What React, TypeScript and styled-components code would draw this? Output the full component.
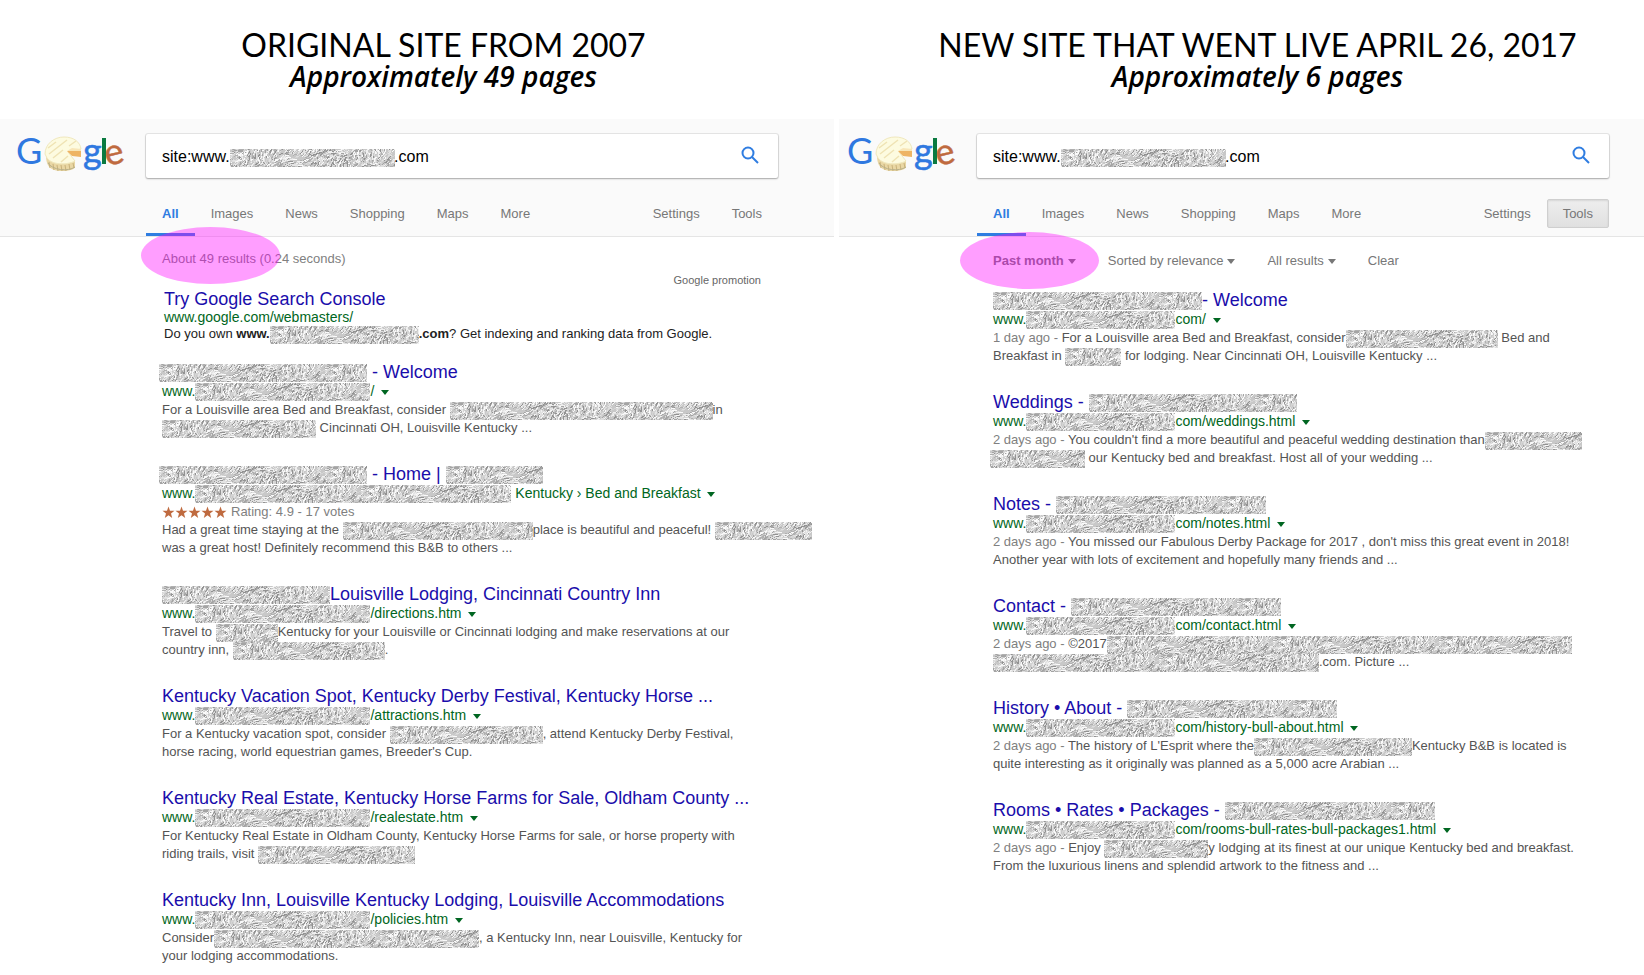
import React from "react";
import styled, { createGlobalStyle } from "styled-components";

const GlobalStyle = createGlobalStyle`
  * { box-sizing: border-box; }
  body {
    margin: 0;
    background: #fff;
    font-family: Arial, "Liberation Sans", sans-serif;
    overflow-x: hidden;
  }
  h2, h3, p { margin: 0; font-weight: 400; }
  button, input { font-family: inherit; }
`;

/* ---------- fur-like texture that hides private names ---------- */

const TILE_W = 166;
const TILE_H = 36;

const strokes = (() => {
  let seed = 20170426;
  const rnd = () => {
    seed = (seed * 1664525 + 1013904223) >>> 0;
    return seed / 4294967296;
  };
  const tones = ["#929292", "#a4a4a4", "#b0b0b0", "#e4e4e4", "#f0f0f0", "#fafafa", "#d4d4d4", "#dedede"];
  const list: { tone: string; d: string }[] = [];
  for (let i = 0; i < 2400; i += 1) {
    const x = rnd() * (TILE_W + 8) - 4;
    const y = rnd() * (TILE_H + 8) - 4;
    const field = Math.sin(x / 9 + Math.sin(y / 5) * 2) + Math.cos(y / 6 + x / 17);
    const angle = -0.8 + field * 0.4 + (rnd() - 0.5) * 0.9;
    const length = 2 + rnd() * 4;
    const dx = Math.cos(angle) * length;
    const dy = Math.sin(angle) * length;
    const tone = tones[Math.floor(rnd() * tones.length)];
    list.push({ tone, d: `M${x.toFixed(1)} ${y.toFixed(1)}l${dx.toFixed(1)} ${dy.toFixed(1)}` });
  }
  return list;
})();

const Defs = styled.svg`
  position: absolute;
  width: 0;
  height: 0;
`;

const TextureDefs = () => (
  <Defs aria-hidden="true">
    <defs>
      <pattern id="fur" width={TILE_W} height={TILE_H} patternUnits="userSpaceOnUse">
        <rect width={TILE_W} height={TILE_H} fill="#c8c8c8" />
        <g fill="none" strokeWidth="1" shapeRendering="crispEdges">
          {strokes.map((s, i) => (
            <path key={i} d={s.d} stroke={s.tone} />
          ))}
        </g>
      </pattern>
    </defs>
  </Defs>
);

const Bar = styled.svg<{ $outdent?: boolean }>`
  display: inline-block;
  height: 18px;
  margin: -4px 0 -4px ${(p) => (p.$outdent ? "-3px" : "0")};
  vertical-align: middle;
`;

const Redaction = ({ width, outdent }: { width: number; outdent?: boolean }) => (
  <Bar width={width} height={18} $outdent={outdent} aria-hidden="true">
    <rect width="100%" height="100%" fill="url(#fur)" />
  </Bar>
);

/* A line is a run of words and redacted spans; numbers are widths of the spans. */
type Part = string | number | { out: number } | { bold: string } | { date: string };
type Line = Part[];

const DateText = styled.span`
  color: #808080;
`;

const Parts = ({ line }: { line: Line }) => (
  <>
    {line.map((part, i) => {
      if (typeof part === "string") return <span key={i}>{part}</span>;
      if (typeof part === "number") return <Redaction key={i} width={part} />;
      if ("out" in part) return <Redaction key={i} width={part.out} outdent />;
      if ("bold" in part) return <b key={i}>{part.bold}</b>;
      return <DateText key={i}>{part.date}</DateText>;
    })}
  </>
);

/* ---------- page ---------- */

const Page = styled.main`
  display: grid;
  grid-template-columns: 834fr 805fr;
  column-gap: 5px;
  min-height: 100vh;
`;

const Panel = styled.section`
  min-width: 0;
`;

const Heading = styled.header<{ $shift: number }>`
  height: 119px;
  padding: 28px 0 0 ${(p) => p.$shift}px;
  text-align: center;
  color: #000;
  white-space: nowrap;
`;

const HeadingTitle = styled.h2`
  font-family: Lato, sans-serif;
  font-size: 32px;
  line-height: 34px;
`;

const HeadingNote = styled.p`
  font-family: "Open Sans", "Noto Sans", sans-serif;
  font-size: 28px;
  line-height: 28px;
  font-style: italic;
  font-weight: 600;
`;

const TopBar = styled.div<{ $gutter: number }>`
  height: 118px;
  padding: 15px 0 0 ${(p) => p.$gutter}px;
  background: #fafafa;
  border-bottom: 1px solid #e5e5e5;
`;

const SearchRow = styled.div`
  display: flex;
  align-items: flex-start;
`;

const LogoLink = styled.a`
  display: block;
  width: 129px;
  height: 44px;
  text-decoration: none;
`;

const LogoArt = styled.svg`
  display: block;
  margin: -10px 0 0 -3px;
  overflow: visible;
`;

const SearchBox = styled.form`
  position: relative;
  display: flex;
  align-items: center;
  width: 632px;
  height: 44px;
  background: #fff;
  border-radius: 2px;
  box-shadow: 0 1px 2px rgba(0, 0, 0, 0.28), 0 0 0 1px rgba(0, 0, 0, 0.08);
`;

const QueryInput = styled.input`
  flex: 1;
  min-width: 0;
  height: 44px;
  padding: 2px 16px 0;
  border: 0;
  outline: 0;
  background: transparent;
  color: #000;
  font-size: 16px;
`;

const QueryCover = styled.span`
  position: absolute;
  left: 84px;
  top: 14px;
  height: 18px;
  line-height: 18px;
`;

const SearchButton = styled.button`
  width: 56px;
  height: 44px;
  padding: 0;
  border: 0;
  background: none;
  cursor: pointer;
  svg { display: block; margin: -2px auto 0; }
`;

const TabRow = styled.nav`
  display: flex;
  width: 632px;
  height: 58px;
  margin-left: 129px;
  align-items: flex-end;
  font-size: 13px;
`;

const Tab = styled.a<{ $active?: boolean }>`
  height: 43px;
  padding: 0 16px;
  line-height: 42px;
  color: ${(p) => (p.$active ? "#2f7de1" : "#777")};
  font-weight: ${(p) => (p.$active ? 700 : 400)};
  border-bottom: 3px solid ${(p) => (p.$active ? "#2f7de1" : "transparent")};
  text-decoration: none;
`;

const Spacer = styled.div`
  flex: 1;
`;

const ToolButton = styled.button<{ $pressed?: boolean }>`
  height: 29px;
  margin-bottom: 8px;
  padding: 0 15px;
  border: 1px solid ${(p) => (p.$pressed ? "#cfcfcf" : "transparent")};
  border-radius: 2px;
  background: ${(p) => (p.$pressed ? "linear-gradient(#eee, #e0e0e0)" : "none")};
  box-shadow: ${(p) => (p.$pressed ? "inset 0 1px 2px rgba(0, 0, 0, 0.1)" : "none")};
  color: #777;
  font-size: 13px;
  cursor: pointer;
`;

const Body = styled.div<{ $gutter: number }>`
  position: relative;
  padding-left: ${(p) => p.$gutter}px;
`;

const Stats = styled.p`
  padding-top: 13px;
  height: 36px;
  font-size: 13px;
  line-height: 18px;
  color: #808080;
`;

const FilterRow = styled.div`
  display: flex;
  gap: 32px;
  padding-top: 15px;
  height: 53px;
`;

const FilterButton = styled.button<{ $selected?: boolean }>`
  display: flex;
  align-items: center;
  gap: 4px;
  height: 18px;
  padding: 0;
  border: 0;
  background: none;
  color: #777;
  font-size: 13px;
  line-height: 18px;
  font-weight: ${(p) => (p.$selected ? 700 : 400)};
`;

const Caret = styled.span<{ $color: string }>`
  display: inline-block;
  border: 4px solid transparent;
  border-top: 5px solid ${(p) => p.$color};
  border-bottom: 0;
`;

const Highlight = styled.div<{ $top: number; $left: number }>`
  position: absolute;
  top: ${(p) => p.$top}px;
  left: ${(p) => p.$left}px;
  width: 139px;
  height: 57px;
  border-radius: 50%;
  background: rgba(255, 0, 255, 0.38);
  pointer-events: none;
`;

const PromoLabel = styled.p`
  width: 599px;
  height: 16px;
  text-align: right;
  font-size: 11px;
  line-height: 14px;
  color: #666;
`;

const Promo = styled.article`
  padding-left: 2px;
  margin-bottom: 20px;
  white-space: nowrap;
`;

const Result = styled.article`
  margin-bottom: 27px;
  white-space: nowrap;
`;

const Title = styled.h3`
  font-size: 18px;
  line-height: 20px;
  height: 20px;
  a { color: #1a0dab; text-decoration: none; }
`;

const UrlLine = styled.div<{ $tight?: boolean }>`
  height: ${(p) => (p.$tight ? 17 : 19)}px;
  line-height: ${(p) => (p.$tight ? 16 : 18)}px;
  font-size: 14px;
  color: #006621;
`;

const MenuButton = styled.button`
  height: 10px;
  margin-left: 3px;
  padding: 0;
  border: 0;
  background: none;
  line-height: 10px;
  vertical-align: 1px;
`;

const Snippet = styled.p<{ $color?: string }>`
  height: 18px;
  font-size: 13px;
  line-height: 18px;
  color: ${(p) => p.$color ?? "#545454"};
`;

const PromoText = styled.p`
  font-size: 13px;
  line-height: 16px;
  height: 16px;
  color: #222;
`;

const Stars = styled.svg`
  display: inline-block;
  margin: -2px 4px -2px 0;
  vertical-align: -1px;
`;

const Logo = () => (
  <LogoArt width="124" height="56" viewBox="-4 -10 124 56" role="img" aria-label="Google">
    <g fontFamily="Lato, sans-serif" fontSize="36">
      <text x="-2" y="30" fill="#2f78e0">G</text>
      <text x="65" y="30" fill="#2f78e0" stroke="#2f78e0" strokeWidth="0.5">g</text>
      <rect x="84" y="4" width="4" height="26" fill="#0a7a40" />
      <text x="87" y="30" fill="#bf6a3f" stroke="#bf6a3f" strokeWidth="0.5" transform="rotate(-14 97 22)">e</text>
    </g>
    <path d="M28 20C28 30 30 37 44 37C52 37 57 35 57 33L57 26L40 29Z" fill="#e9d7a4" />
    <path d="M31 28L32 34M35 30L36 36M39 31L40 37M43 31L44 37M47 31L48 37M51 30L52 36M55 29L56 34" stroke="#c9b27a" strokeWidth="1" />
    <path d="M30 29C34 36 50 38 57 33" fill="none" stroke="#b9b08a" strokeWidth="1" />
    <path d="M27 20C27 10 36 3 46 3C56 3 62 8 63 15L50 18L57 27C50 31 32 32 28 22Z" fill="#fdfbe0" stroke="#f0e8bd" strokeWidth="1" />
    <path d="M31 20L49 6M35 24L45 16M51 12L58 7M43 28L50 22M30 14L38 8" stroke="#efe3b4" strokeWidth="1.5" />
    <path d="M49 17L63 17L63 23L54 22Z" fill="#eeb465" />
    <path d="M49 17L63 17L63 15L54 14Z" fill="#f8e6b8" />
  </LogoArt>
);

const SearchIcon = () => (
  <svg width="18" height="18" viewBox="0 0 18 18" fill="none" stroke="#2f7de1" strokeWidth="2" aria-hidden="true">
    <circle cx="7" cy="7" r="5.500" />
    <path d="M11 11L17 17" />
  </svg>
);

const StarRow = () => (
  <Stars width="65" height="13" viewBox="0 0 65 13" fill="#bf6a3f" role="img" aria-label="5 stars">
    {[0, 13, 26, 39, 52].map((x) => (
      <path key={x} transform={`translate(${x} 0)`} d="M6.500 0.500L8 4.800H12.500L9 7.600L10.200 12L6.500 9.300L2.800 12L4 7.600L0.500 4.800H5Z" />
    ))}
  </Stars>
);

const QUERY = `site:www.${"\u00a0".repeat(37)}.com`;

const SearchHeader = ({ id, gutter, toolsOpen }: { id: string; gutter: number; toolsOpen?: boolean }) => (
  <TopBar $gutter={gutter}>
    <SearchRow>
      <LogoLink href="#"><Logo /></LogoLink>
      <SearchBox role="search" onSubmit={(e) => e.preventDefault()}>
        <QueryInput id={id} aria-label="Search" defaultValue={QUERY} />
        <QueryCover><Redaction width={165} /></QueryCover>
        <SearchButton type="submit" aria-label="Search"><SearchIcon /></SearchButton>
      </SearchBox>
    </SearchRow>
    <TabRow>
      <Tab href="#" $active>All</Tab>
      {["Images", "News", "Shopping", "Maps", "More"].map((name) => (
        <Tab key={name} href="#">{name}</Tab>
      ))}
      <Spacer />
      <ToolButton type="button">Settings</ToolButton>
      <ToolButton type="button" $pressed={toolsOpen}>Tools</ToolButton>
    </TabRow>
  </TopBar>
);

interface ResultData {
  title: Line;
  url: Line;
  rating?: string;
  text: Line[];
}

const ResultItem = ({ data }: { data: ResultData }) => (
  <Result>
    <Title><a href="#"><Parts line={data.title} /></a></Title>
    <UrlLine>
      <Parts line={data.url} />{" "}
      <MenuButton type="button" aria-label="More options"><Caret $color="#006621" /></MenuButton>
    </UrlLine>
    {data.rating && <Snippet $color="#808080"><StarRow />{data.rating}</Snippet>}
    {data.text.map((line, i) => (
      <Snippet key={i}><Parts line={line} /></Snippet>
    ))}
  </Result>
);

const oldResults: ResultData[] = [
  {
    title: [{ out: 208 }, " - Welcome"],
    url: ["www.", 175, "/"],
    text: [
      ["For a Louisville area Bed and Breakfast, consider ", 263, "in"],
      [154, " Cincinnati OH, Louisville Kentucky ..."],
    ],
  },
  {
    title: [{ out: 208 }, " - Home | ", 97],
    url: ["www.", 316, " Kentucky › Bed and Breakfast"],
    rating: "Rating: 4.9 - 17 votes",
    text: [
      ["Had a great time staying at the ", 190, "place is beautiful and peaceful! ", 97],
      ["was a great host! Definitely recommend this B&B to others ..."],
    ],
  },
  {
    title: [168, "Louisville Lodging, Cincinnati Country Inn"],
    url: ["www.", 175, "/directions.htm"],
    text: [
      ["Travel to ", 62, "Kentucky for your Louisville or Cincinnati lodging and make reservations at our"],
      ["country inn, ", 152, "."],
    ],
  },
  {
    title: ["Kentucky Vacation Spot, Kentucky Derby Festival, Kentucky Horse ..."],
    url: ["www.", 175, "/attractions.htm"],
    text: [
      ["For a Kentucky vacation spot, consider ", 153, ", attend Kentucky Derby Festival,"],
      ["horse racing, world equestrian games, Breeder's Cup."],
    ],
  },
  {
    title: ["Kentucky Real Estate, Kentucky Horse Farms for Sale, Oldham County ..."],
    url: ["www.", 175, "/realestate.htm"],
    text: [
      ["For Kentucky Real Estate in Oldham County, Kentucky Horse Farms for sale, or horse property with"],
      ["riding trails, visit ", 157],
    ],
  },
  {
    title: ["Kentucky Inn, Louisville Kentucky Lodging, Louisville Accommodations"],
    url: ["www.", 175, "/policies.htm"],
    text: [
      ["Consider", 265, ", a Kentucky Inn, near Louisville, Kentucky for"],
      ["your lodging accommodations."],
    ],
  },
];

const newResults: ResultData[] = [
  {
    title: [209, "- Welcome"],
    url: ["www.", 149, "com/"],
    text: [
      [{ date: "1 day ago - " }, "For a Louisville area Bed and Breakfast, consider", 152, " Bed and"],
      ["Breakfast in ", 56, " for lodging. Near Cincinnati OH, Louisville Kentucky ..."],
    ],
  },
  {
    title: ["Weddings - ", 208],
    url: ["www.", 149, "com/weddings.html"],
    text: [
      [{ date: "2 days ago - " }, "You couldn't find a more beautiful and peaceful wedding destination than", 97],
      [{ out: 95 }, " our Kentucky bed and breakfast. Host all of your wedding ..."],
    ],
  },
  {
    title: ["Notes - ", 210],
    url: ["www.", 149, "com/notes.html"],
    text: [
      [{ date: "2 days ago - " }, "You missed our Fabulous Derby Package for 2017 , don't miss this great event in 2018!"],
      ["Another year with lots of excitement and hopefully many friends and ..."],
    ],
  },
  {
    title: ["Contact - ", 210],
    url: ["www.", 149, "com/contact.html"],
    text: [
      [{ date: "2 days ago - " }, "©2017", 465],
      [326, ".com. Picture ..."],
    ],
  },
  {
    title: ["History • About - ", 210],
    url: ["www.", 149, "com/history-bull-about.html"],
    text: [
      [{ date: "2 days ago - " }, "The history of L'Esprit where the", 158, "Kentucky B&B is located is"],
      ["quite interesting as it originally was planned as a 5,000 acre Arabian ..."],
    ],
  },
  {
    title: ["Rooms • Rates • Packages - ", 210],
    url: ["www.", 149, "com/rooms-bull-rates-bull-packages1.html"],
    text: [
      [{ date: "2 days ago - " }, "Enjoy ", 104, "y lodging at its finest at our unique Kentucky bed and breakfast."],
      ["From the luxurious linens and splendid artwork to the fitness and ..."],
    ],
  },
];

export default function App() {
  return (
    <>
      <GlobalStyle />
      <TextureDefs />
      <Page>
        <Panel>
          <Heading $shift={53}>
            <HeadingTitle>ORIGINAL SITE FROM 2007</HeadingTitle>
            <HeadingNote>Approximately 49 pages</HeadingNote>
          </Heading>
          <SearchHeader id="query-old" gutter={17} />
          <Body $gutter={162}>
            <Stats>About 49 results (0.24 seconds)</Stats>
            <PromoLabel>Google promotion</PromoLabel>
            <Promo>
              <Title><a href="#">Try Google Search Console</a></Title>
              <UrlLine $tight>www.google.com/webmasters/</UrlLine>
              <PromoText>
                <Parts line={["Do you own ", { bold: "www." }, 149, { bold: ".com" }, "? Get indexing and ranking data from Google."]} />
              </PromoText>
            </Promo>
            {oldResults.map((data, i) => <ResultItem key={i} data={data} />)}
            <Highlight $top={-10} $left={141} />
          </Body>
        </Panel>
        <Panel>
          <Heading $shift={32}>
            <HeadingTitle>NEW SITE THAT WENT LIVE APRIL 26, 2017</HeadingTitle>
            <HeadingNote>Approximately 6 pages</HeadingNote>
          </Heading>
          <SearchHeader id="query-new" gutter={9} toolsOpen />
          <Body $gutter={154}>
            <FilterRow>
              <FilterButton type="button" $selected>Past month <Caret $color="#777" /></FilterButton>
              <FilterButton type="button">Sorted by relevance <Caret $color="#777" /></FilterButton>
              <FilterButton type="button">All results <Caret $color="#777" /></FilterButton>
              <FilterButton type="button">Clear</FilterButton>
            </FilterRow>
            {newResults.map((data, i) => <ResultItem key={i} data={data} />)}
            <Highlight $top={-5} $left={121} />
          </Body>
        </Panel>
      </Page>
    </>
  );
}
